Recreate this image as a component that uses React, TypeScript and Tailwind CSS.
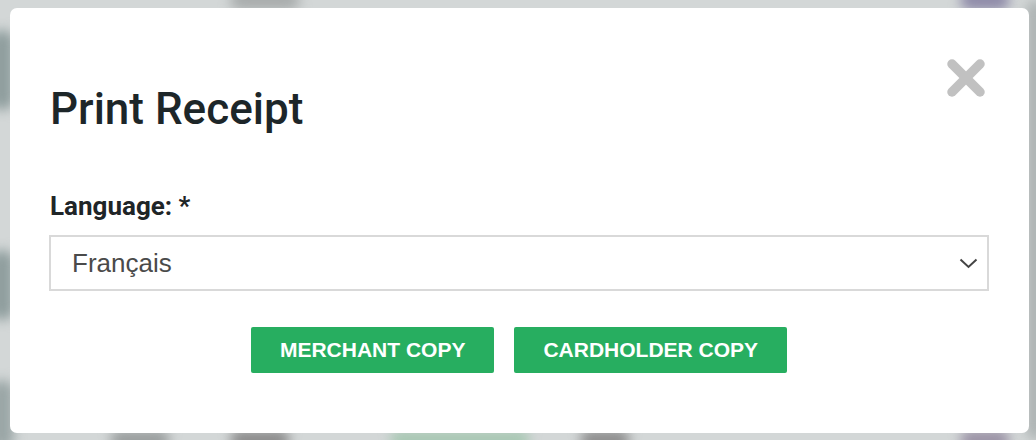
import React from "react";

const blobs: { cls: string }[] = [
  { cls: "left-[-10px] top-[30px] w-[24px] h-[80px] bg-[#8f9e9e]" },
  { cls: "left-[-10px] top-[250px] w-[24px] h-[70px] bg-[#8f9e9e]" },
  { cls: "left-[-10px] top-[380px] w-[24px] h-[70px] bg-[#9aa6a6]" },
  { cls: "left-[110px] top-[430px] w-[60px] h-[20px] bg-[#9a9e9e]" },
  { cls: "left-[230px] top-[430px] w-[60px] h-[20px] bg-[#8c8c8c]" },
  { cls: "left-[390px] top-[430px] w-[140px] h-[20px] bg-[#a9c8b4]" },
  { cls: "left-[580px] top-[430px] w-[50px] h-[20px] bg-[#8e8e8e]" },
  { cls: "left-[960px] top-[430px] w-[50px] h-[20px] bg-[#9b93a6]" },
  { cls: "left-[230px] top-[-10px] w-[70px] h-[20px] bg-[#a8acac]" },
  { cls: "left-[960px] top-[-10px] w-[50px] h-[20px] bg-[#8e8aa8]" },
  { cls: "left-[1026px] top-[0px] w-[20px] h-[440px] bg-[#aeb4b4]" },
];

export default function App() {
  return (
    <div className="relative w-[1036px] h-[440px] overflow-hidden bg-[#d3d7d7] pt-[8px] pl-[10px]">
      {blobs.map((b, i) => (
        <div key={i} className={`absolute blur-[6px] rounded-full ${b.cls}`} />
      ))}
      <div
        className="relative w-[1019px] h-[425px] rounded-[7px] bg-white pl-[39px] pr-10 pt-[75px]"
        style={{ fontFamily: "Roboto, 'Liberation Sans', sans-serif" }}
      >
        <button
          aria-label="Close"
          className="absolute left-[937px] top-[51px] w-[38px] h-[38px]"
        >
          <svg width="38" height="38" viewBox="0 0 38 38">
            <line x1="5" y1="5" x2="33" y2="33" stroke="#c1c1c1" strokeWidth="9.5" strokeLinecap="round" />
            <line x1="33" y1="5" x2="5" y2="33" stroke="#c1c1c1" strokeWidth="9.5" strokeLinecap="round" />
          </svg>
        </button>
        <h1 className="pl-[1px] text-[44px] leading-[52px] font-medium text-[#1d2629]">Print Receipt</h1>
        <label className="block pl-[1px] mt-[53px] text-[26px] leading-[36px] font-bold text-[#1f2527]">
          Language: *
        </label>
        <div className="mt-[11px] h-[56px] w-full border-2 border-[#d9d9d9] flex items-center justify-between pl-[21px] pr-[8px]">
          <span
            className="text-[26px] text-[#4a4a4a]"
            style={{ fontFamily: "'Liberation Sans', Arial, sans-serif" }}
          >
            Français
          </span>
          <svg width="19" height="11" viewBox="0 0 19 11" className="mr-[1px]">
            <polyline points="1.5,1.5 9.5,9 17.5,1.5" fill="none" stroke="#444" strokeWidth="2" />
          </svg>
        </div>
        <div
          className="mt-[36px] flex justify-center gap-5"
          style={{ fontFamily: "'Liberation Sans', Arial, sans-serif" }}
        >
          <button className="h-[46px] px-[29px] rounded-[2px] bg-[#27ae60] text-white font-bold text-[21px] uppercase">
            Merchant Copy
          </button>
          <button className="h-[46px] px-[29px] rounded-[2px] bg-[#27ae60] text-white font-bold text-[21px] uppercase">
            Cardholder Copy
          </button>
        </div>
      </div>
    </div>
  );
}
